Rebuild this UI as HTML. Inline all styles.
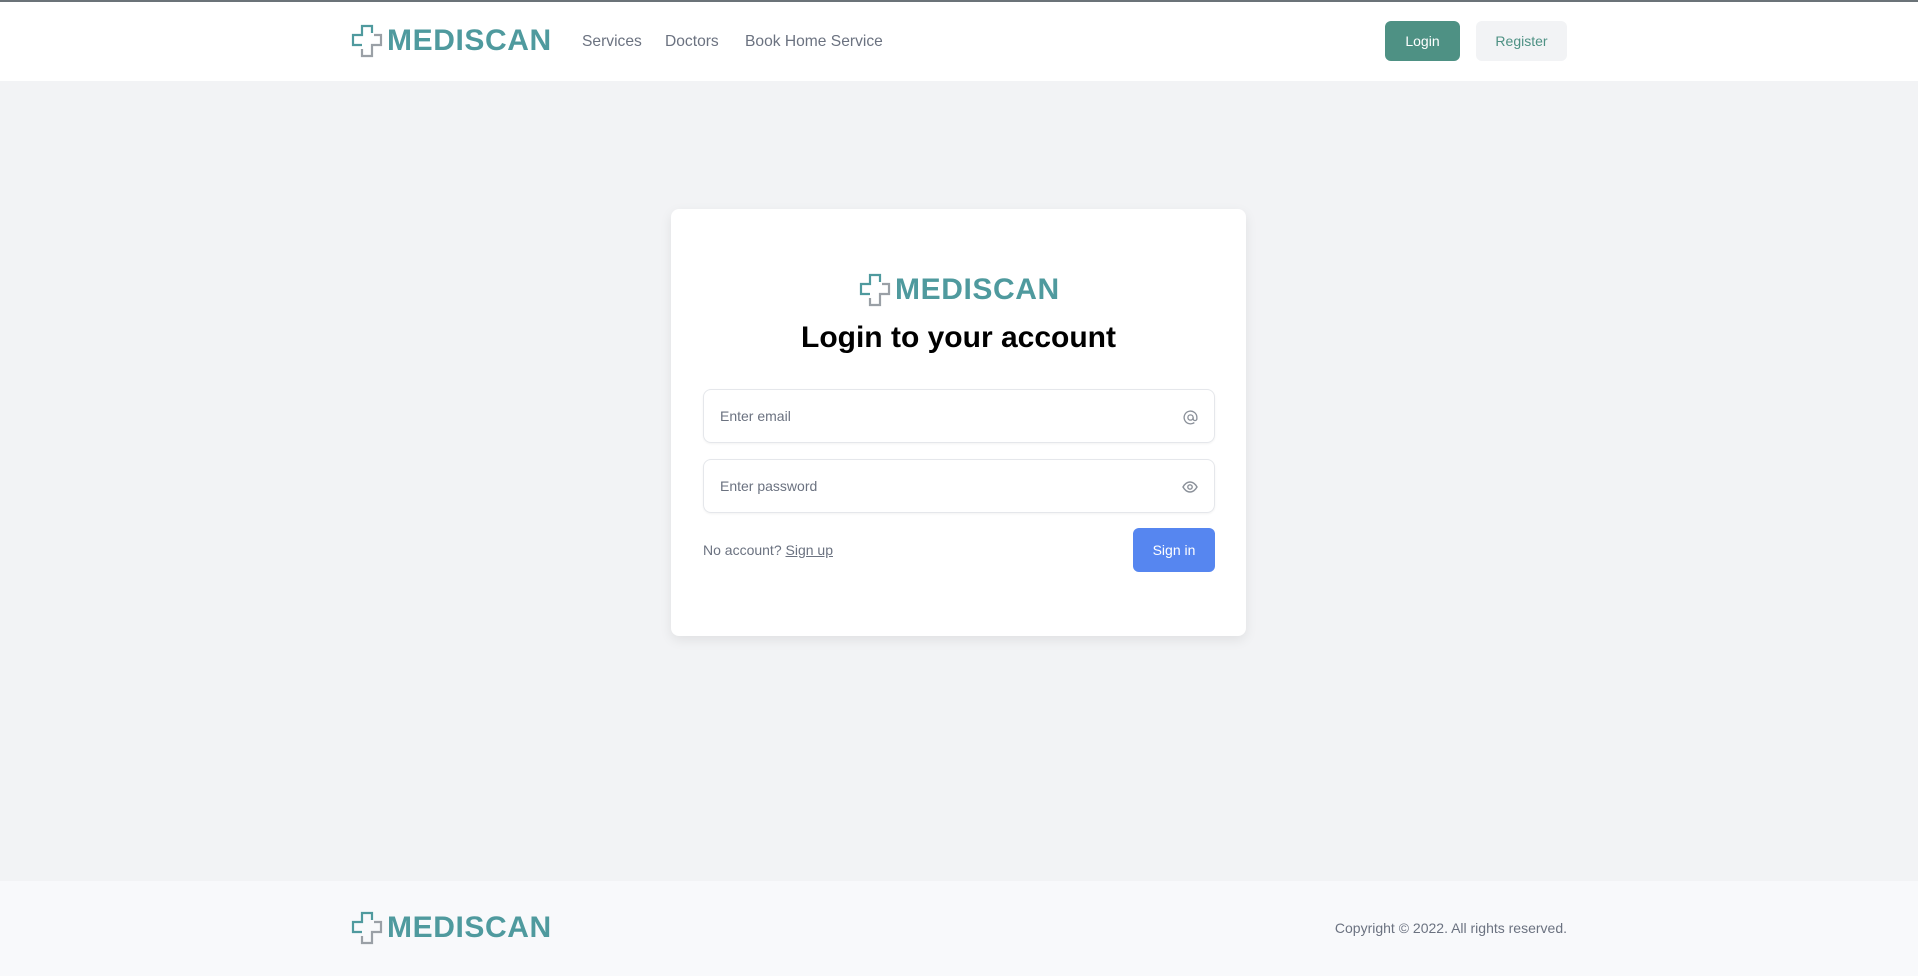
<!DOCTYPE html>
<html><head><meta charset="utf-8">
<style>
*{box-sizing:border-box;margin:0;padding:0}
body{width:1918px;height:976px;background:#f2f3f5;font-family:"Liberation Sans",sans-serif;position:relative;overflow:hidden}
.top{position:absolute;left:0;top:0;width:1918px;height:81px;background:#fff;border-top:2px solid #6b7378}
.logo{position:absolute;display:flex;align-items:center}
.logo span{font-weight:700;color:#4f9a9e;font-size:30px;letter-spacing:0.6px;margin-left:4px}
.nav{position:absolute;top:31px;font-size:15.6px;color:#6b7280}
.btn{position:absolute;border-radius:6px;font-size:14px;display:flex;align-items:center;justify-content:center}
.card{position:absolute;left:671px;top:209px;width:575px;height:427px;background:#fff;border-radius:8px;box-shadow:0 4px 12px rgba(0,0,0,.08)}
.inp{position:absolute;left:32px;width:512px;height:54px;border:1px solid #e5e7eb;border-radius:8px;box-shadow:0 1px 2px rgba(0,0,0,.05);font-size:14px;color:#6b7280;padding-left:16px;display:flex;align-items:center}
.inp svg{position:absolute;right:16px;top:20px}
.foot{position:absolute;left:0;top:881px;width:1918px;height:95px;background:#f8f9fb}
</style></head><body>
<div class="top">
  <div class="logo" style="left:351px;top:22px">
    <svg width="32" height="34" viewBox="0 0 32 34"><path d="M11 21H2V11h9V2h10v7" fill="none" stroke="#4f9a9e" stroke-width="2.2"/><path d="M23 11h7v10H21v11H11v-7" fill="none" stroke="#9aa0a6" stroke-width="2.2"/></svg>
    <span>MEDISCAN</span>
  </div>
  <div class="nav" style="left:582px">Services</div>
  <div class="nav" style="left:665px">Doctors</div>
  <div class="nav" style="left:745px">Book Home Service</div>
  <div class="btn" style="left:1385px;top:19px;width:75px;height:40px;background:#4e9184;color:#fff">Login</div>
  <div class="btn" style="left:1476px;top:19px;width:91px;height:40px;background:#f2f3f5;color:#4e9184">Register</div>
</div>
<div class="card">
  <div class="logo" style="left:188px;top:64px">
    <svg width="32" height="34" viewBox="0 0 32 34"><path d="M11 21H2V11h9V2h10v7" fill="none" stroke="#4f9a9e" stroke-width="2.2"/><path d="M23 11h7v10H21v11H11v-7" fill="none" stroke="#9aa0a6" stroke-width="2.2"/></svg>
    <span>MEDISCAN</span>
  </div>
  <div style="position:absolute;left:0;width:575px;top:112px;text-align:center;font-size:30px;font-weight:700;color:#000">Login to your account</div>
  <div class="inp" style="top:180px">Enter email<svg width="15" height="15" viewBox="0 0 16 16" fill="none" stroke="#8a9099" stroke-width="1.4"><circle cx="8" cy="8" r="2.8"/><path d="M10.8 8v1.3a2 2 0 004 0V8a6.8 6.8 0 10-2.7 5.4"/></svg></div>
  <div class="inp" style="top:250px">Enter password<svg width="16" height="14" viewBox="0 0 16 14" fill="none" stroke="#8a9099" stroke-width="1.4"><path d="M1 7c2-3.5 4.5-5 7-5s5 1.5 7 5c-2 3.5-4.5 5-7 5S3 10.5 1 7z"/><circle cx="8" cy="7" r="2.2"/></svg></div>
  <div style="position:absolute;left:32px;top:333px;font-size:14px;color:#6b7280">No account? <u>Sign up</u></div>
  <div class="btn" style="left:462px;top:319px;width:82px;height:44px;background:#5686f0;color:#fff">Sign in</div>
</div>
<div class="foot">
  <div class="logo" style="left:351px;top:30px">
    <svg width="32" height="34" viewBox="0 0 32 34"><path d="M11 21H2V11h9V2h10v7" fill="none" stroke="#4f9a9e" stroke-width="2.2"/><path d="M23 11h7v10H21v11H11v-7" fill="none" stroke="#9aa0a6" stroke-width="2.2"/></svg>
    <span>MEDISCAN</span>
  </div>
  <div style="position:absolute;right:351px;top:39px;font-size:14px;color:#6b7280">Copyright © 2022. All rights reserved.</div>
</div>
</body></html>
